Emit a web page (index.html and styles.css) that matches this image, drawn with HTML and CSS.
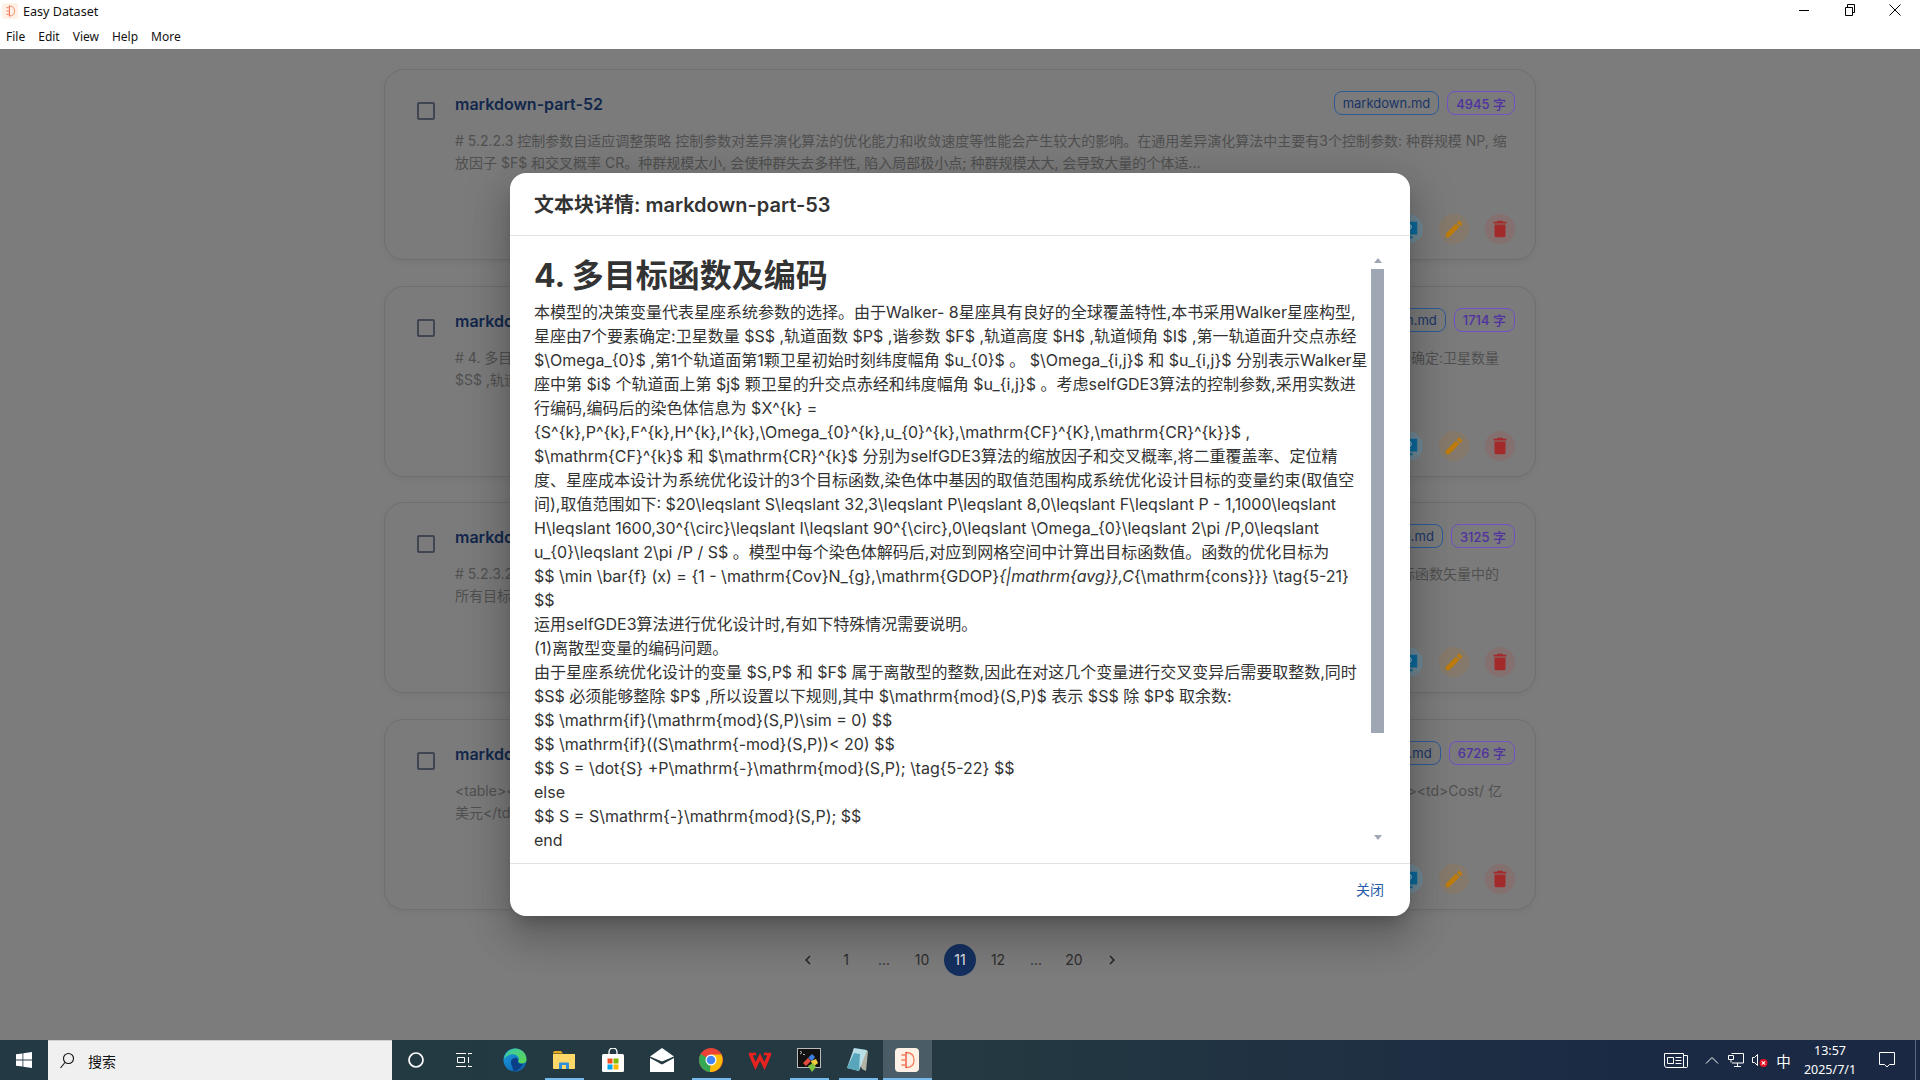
FILE: index.html
```html
<!DOCTYPE html>
<html lang="zh">
<head>
<meta charset="utf-8">
<title>Easy Dataset</title>
<link rel="stylesheet" href="styles.css">
</head>
<body>
<svg class="defs" width="0" height="0">
  <symbol id="ed-logo" viewBox="0 0 24 24">
    <rect width="24" height="24" rx="4" fill="#fff1e6"/>
    <path d="M11 4.500c5.500 0 8 3.200 8 7.500s-2.500 7.500-8 7.500" fill="none" stroke="#f2805c" stroke-width="1.300"/>
    <path d="M11 4v16" stroke="#e8482e" stroke-width="1.300"/>
    <path d="M6.500 7H10M6.500 12H10M6.500 17H10" stroke="#f2805c" stroke-width="1.500"/>
  </symbol>
  <symbol id="i-view" viewBox="0 0 24 24">
    <path d="M2 4h20v14h-8v2h3v2H7v-2h3v-2H2z"/>
    <path d="M12 7.500a2.500 2.500 0 0 1 3.600 2.300c0 1.500-1.800 1.700-1.800 3M13.800 14.300v1.200" fill="none" stroke="#8fb0c4" stroke-width="1.300"/>
  </symbol>
  <symbol id="i-edit" viewBox="0 0 24 24"><path d="M3 17.250V21h3.750L17.810 9.940l-3.750-3.750zM20.710 7.040c.39-.39.39-1.020 0-1.410l-2.340-2.340a.9959.9959 0 0 0-1.410 0l-1.830 1.830 3.750 3.750z"/></symbol>
  <symbol id="i-del" viewBox="0 0 24 24"><path d="M6 19c0 1.100.9 2 2 2h8c1.100 0 2-.9 2-2V7H6zM19 4h-3.500l-1-1h-5l-1 1H5v2h14z"/></symbol>
  <symbol id="i-box" viewBox="0 0 24 24"><path d="M19 5v14H5V5zm0-2H5c-1.100 0-2 .9-2 2v14c0 1.100.9 2 2 2h14c1.100 0 2-.9 2-2V5c0-1.100-.9-2-2-2z"/></symbol>
</svg>

<div class="app">
  <header class="chrome">
    <div class="title-row">
      <svg class="title-logo" width="16" height="16"><use href="#ed-logo"/></svg>
      <span class="app-name">Easy Dataset</span>
      <div class="win-controls">
        <span class="win-btn"><svg width="12" height="12" viewBox="0 0 12 12"><path d="M1 6.500h10" stroke="#000"/></svg></span>
        <span class="win-btn"><svg width="12" height="12" viewBox="0 0 12 12" fill="none" stroke="#000"><path d="M1.500 3.500h7v8h-7zM3.500 3.500v-3h7v8h-2"/></svg></span>
        <span class="win-btn"><svg width="12" height="12" viewBox="0 0 12 12"><path d="M.5.5l11 11M11.500.5l-11 11" stroke="#000"/></svg></span>
      </div>
    </div>
    <nav class="menu-row">
      <span class="menu-item">File</span><span class="menu-item">Edit</span><span class="menu-item">View</span><span class="menu-item">Help</span><span class="menu-item">More</span>
    </nav>
  </header>

  <main class="main">
    <section class="list">
      <article class="card">
        <span class="check"><svg width="24" height="24"><use href="#i-box"/></svg></span>
        <div class="card-body">
          <div class="card-head">
            <h3 class="card-title">markdown-part-52</h3>
            <span class="chip chip-file">markdown.md</span>
            <span class="chip chip-count">4945 字</span>
          </div>
          <p class="card-desc"># 5.2.2.3 控制参数自适应调整策略 控制参数对差异演化算法的优化能力和收敛速度等性能会产生较大的影响。在通用差异演化算法中主要有3个控制参数: 种群规模 NP, 缩放因子 $F$ 和交叉概率 CR。种群规模太小, 会使种群失去多样性, 陷入局部极小点; 种群规模太大, 会导致大量的个体适...</p>
          <div class="card-actions">
            <span class="act act-view"><svg width="22" height="22"><use href="#i-view"/></svg></span>
            <span class="act act-edit"><svg width="22" height="22"><use href="#i-edit"/></svg></span>
            <span class="act act-del"><svg width="22" height="22"><use href="#i-del"/></svg></span>
          </div>
        </div>
      </article>
      <article class="card">
        <span class="check"><svg width="24" height="24"><use href="#i-box"/></svg></span>
        <div class="card-body">
          <div class="card-head">
            <h3 class="card-title">markdown-part-53</h3>
            <span class="chip chip-file">markdown.md</span>
            <span class="chip chip-count">1714 字</span>
          </div>
          <p class="card-desc"># 4. 多目标函数及编码 本模型的决策变量代表星座系统参数的选择。由于Walker- 8星座具有良好的全球覆盖特性,本书采用Walker星座构型,星座由7个要素确定:卫星数量 $S$ ,轨道面数 $P$ ,谐参数 $F$ ,轨道高度 $H$ ,轨道倾角 $I$ ,第一轨道面升交点赤经...</p>
          <div class="card-actions">
            <span class="act act-view"><svg width="22" height="22"><use href="#i-view"/></svg></span>
            <span class="act act-edit"><svg width="22" height="22"><use href="#i-edit"/></svg></span>
            <span class="act act-del"><svg width="22" height="22"><use href="#i-del"/></svg></span>
          </div>
        </div>
      </article>
      <article class="card">
        <span class="check"><svg width="24" height="24"><use href="#i-box"/></svg></span>
        <div class="card-body">
          <div class="card-head">
            <h3 class="card-title">markdown-part-54</h3>
            <span class="chip chip-file">markdown.md</span>
            <span class="chip chip-count">3125 字</span>
          </div>
          <p class="card-desc"># 5.2.3.2 多目标优化算法的性能评价指标 在多目标优化问题的求解过程中,为了全面衡量所得近似解集质量,需要比较各个解在目标空间中的优劣,通常以目标函数矢量中的<br>所有目标分量进行比较,并据此判断解之间的支配关系...</p>
          <div class="card-actions">
            <span class="act act-view"><svg width="22" height="22"><use href="#i-view"/></svg></span>
            <span class="act act-edit"><svg width="22" height="22"><use href="#i-edit"/></svg></span>
            <span class="act act-del"><svg width="22" height="22"><use href="#i-del"/></svg></span>
          </div>
        </div>
      </article>
      <article class="card">
        <span class="check"><svg width="24" height="24"><use href="#i-box"/></svg></span>
        <div class="card-body">
          <div class="card-head">
            <h3 class="card-title">markdown-part-55</h3>
            <span class="chip chip-file">markdown.md</span>
            <span class="chip chip-count">6726 字</span>
          </div>
          <p class="card-desc">&lt;table&gt;&lt;tr&gt;&lt;td&gt;星座设计案&lt;/td&gt;&lt;td&gt;Coverage/%&lt;/td&gt;&lt;td&gt;GDOP&lt;/td&gt;&lt;td&gt;S&lt;/td&gt;&lt;td&gt;P&lt;/td&gt;&lt;td&gt;F&lt;/td&gt;&lt;td&gt;H/km&lt;/td&gt;&lt;td&gt;I&lt;/td&gt;&lt;td&gt;Ω&lt;/td&gt;&lt;td&gt;Cost/ 亿<br>美元&lt;/td&gt;&lt;/tr&gt;&lt;tr&gt;&lt;td&gt;1&lt;/td&gt;&lt;/tr&gt;...</p>
          <div class="card-actions">
            <span class="act act-view"><svg width="22" height="22"><use href="#i-view"/></svg></span>
            <span class="act act-edit"><svg width="22" height="22"><use href="#i-edit"/></svg></span>
            <span class="act act-del"><svg width="22" height="22"><use href="#i-del"/></svg></span>
          </div>
        </div>
      </article>
    </section>

    <nav class="pager">
      <span class="page"><svg width="18" height="18" viewBox="0 0 24 24"><path d="M15.410 7.410 14 6l-6 6 6 6 1.410-1.410L10.830 12z"/></svg></span>
      <span class="page">1</span><span class="page">...</span><span class="page">10</span><span class="page page-on">11</span><span class="page">12</span><span class="page">...</span><span class="page">20</span>
      <span class="page"><svg width="18" height="18" viewBox="0 0 24 24"><path d="M10 6 8.590 7.410 13.170 12l-4.580 4.590L10 18l6-6z"/></svg></span>
    </nav>

    <div class="dialog-wrap">
      <div class="dialog">
        <h2 class="dialog-title">文本块详情: markdown-part-53</h2>
        <div class="dialog-body">
          <div class="doc">
            <h1 class="doc-h1">4. 多目标函数及编码</h1>
            <p class="doc-p">本模型的决策变量代表星座系统参数的选择。由于Walker- 8星座具有良好的全球覆盖特性,本书采用Walker星座构型,<br>星座由7个要素确定:卫星数量 $S$ ,轨道面数 $P$ ,谐参数 $F$ ,轨道高度 $H$ ,轨道倾角 $I$ ,第一轨道面升交点赤经<br>$\Omega_{0}$ ,第1个轨道面第1颗卫星初始时刻纬度幅角 $u_{0}$ 。 $\Omega_{i,j}$ 和 $u_{i,j}$ 分别表示Walker星<br>座中第 $i$ 个轨道面上第 $j$ 颗卫星的升交点赤经和纬度幅角 $u_{i,j}$ 。考虑selfGDE3算法的控制参数,采用实数进<br>行编码,编码后的染色体信息为 $X^{k} =<br>{S^{k},P^{k},F^{k},H^{k},I^{k},\Omega_{0}^{k},u_{0}^{k},\mathrm{CF}^{K},\mathrm{CR}^{k}}$ ,<br>$\mathrm{CF}^{k}$ 和 $\mathrm{CR}^{k}$ 分别为selfGDE3算法的缩放因子和交叉概率,将二重覆盖率、定位精<br>度、星座成本设计为系统优化设计的3个目标函数,染色体中基因的取值范围构成系统优化设计目标的变量约束(取值空<br>间),取值范围如下: $20\leqslant S\leqslant 32,3\leqslant P\leqslant 8,0\leqslant F\leqslant P - 1,1000\leqslant<br>H\leqslant 1600,30^{\circ}\leqslant I\leqslant 90^{\circ},0\leqslant \Omega_{0}\leqslant 2\pi /P,0\leqslant<br>u_{0}\leqslant 2\pi /P / S$ 。模型中每个染色体解码后,对应到网格空间中计算出目标函数值。函数的优化目标为<br>$$ \min \bar{f} (x) = {1 - \mathrm{Cov}N_{g},\mathrm{GDOP}<em>{|mathrm{avg}},C</em>{\mathrm{cons}}} \tag{5-21}<br>$$<br>运用selfGDE3算法进行优化设计时,有如下特殊情况需要说明。<br>(1)离散型变量的编码问题。<br>由于星座系统优化设计的变量 $S,P$ 和 $F$ 属于离散型的整数,因此在对这几个变量进行交叉变异后需要取整数,同时<br>$S$ 必须能够整除 $P$ ,所以设置以下规则,其中 $\mathrm{mod}(S,P)$ 表示 $S$ 除 $P$ 取余数:<br>$$ \mathrm{if}(\mathrm{mod}(S,P)\sim = 0) $$<br>$$ \mathrm{if}((S\mathrm{-mod}(S,P))&lt; 20) $$<br>$$ S = \dot{S} +P\mathrm{-}\mathrm{mod}(S,P); \tag{5-22} $$<br>else<br>$$ S = S\mathrm{-}\mathrm{mod}(S,P); $$<br>end</p>
          </div>
          <div class="scrollbar">
            <span class="sb-up"></span>
            <span class="sb-thumb"></span>
            <span class="sb-down"></span>
          </div>
        </div>
        <div class="dialog-foot"><span class="btn-close">关闭</span></div>
      </div>
    </div>
  </main>

  <footer class="taskbar">
    <span class="start"><svg width="16" height="16" viewBox="0 0 16 16" fill="#fff"><path d="M0 2.300 6.500 1.400v6.200H0zM7.300 1.300 16 0v7.600H7.300zM0 8.400h6.500v6.200L0 13.700zM7.300 8.400H16V16l-8.700-1.300z"/></svg></span>
    <div class="search">
      <svg width="16" height="18" viewBox="0 0 16 18" fill="none" stroke="#111" stroke-width="1.100"><circle cx="9.500" cy="6.500" r="5"/><path d="M6 10.500 1.500 16"/></svg>
      <span>搜索</span>
    </div>
    <span class="tb-sys"><svg width="18" height="18" viewBox="0 0 18 18"><circle cx="9" cy="9" r="7" fill="none" stroke="#fff" stroke-width="1.700"/></svg></span>
    <span class="tb-sys tb-sys-last"><svg width="18" height="18" viewBox="0 0 18 18" fill="none" stroke="#fff"><path d="M1 2.500h10M1 15.500h10M2.500 6.500h7v5h-7zM13.500 2v1.500M13.500 6v6M13.500 14.500V16M13.500 2.500H17M13.500 15.500H17"/></svg></span>

    <span class="tb-app"><svg width="24" height="24" viewBox="0 0 24 24">
      <defs>
        <linearGradient id="edge-a" x1="0" y1="0" x2="1" y2="1"><stop offset="0" stop-color="#36c7b0"/><stop offset="1" stop-color="#5fd94b"/></linearGradient>
        <linearGradient id="edge-b" x1="0" y1="0" x2="1" y2="1"><stop offset="0" stop-color="#1a9fe0"/><stop offset="1" stop-color="#0b5aa8"/></linearGradient>
      </defs>
      <circle cx="12" cy="12" r="11.500" fill="url(#edge-b)"/>
      <path d="M1 11C2 4.500 7 .5 12.500.5 19 .5 23.500 5.500 23.500 11.500c0 2.500-2 4-4.500 4-2 0-4-1-4-2.500 1-1 1-2 .5-3.500C14 6.500 10.500 5.500 7.500 6.500 4.500 7.500 2.500 9 1 11z" fill="url(#edge-a)"/>
      <path d="M8 14c0-3 2.500-4.500 5-4 2 .5 2.500 2 2 3.500 0 2.500 3 3 5 2-1.500 4-5 7.500-10 7.500C11 20 8 18 8 14z" fill="#0a3e86"/>
    </svg></span>
    <span class="tb-app tb-on"><svg width="24" height="24" viewBox="0 0 24 24">
      <path d="M1 5a2 2 0 0 1 2-2h6l2 2.500H1z" fill="#e8a91e"/>
      <path d="M1 6h22v14a1 1 0 0 1-1 1H2a1 1 0 0 1-1-1z" fill="#fdd768"/>
      <path d="M7 21v-5.500a1 1 0 0 1 1-1h8a1 1 0 0 1 1 1V21h-3v-4h-4v4z" fill="#2f8fdc"/>
    </svg></span>
    <span class="tb-app"><svg width="24" height="24" viewBox="0 0 24 24">
      <path d="M8 7V4a4 4 0 0 1 8 0v3" fill="none" stroke="#fff" stroke-width="1.300"/>
      <rect x="1" y="6" width="22" height="18" rx="1.500" fill="#fff"/>
      <path d="M6.500 10.500h5v5h-5z" fill="#f25022"/><path d="M12.500 10.500h5v5h-5z" fill="#7fba00"/><path d="M6.500 16.500h5v5h-5z" fill="#00a4ef"/><path d="M12.500 16.500h5v5h-5z" fill="#ffb900"/>
    </svg></span>
    <span class="tb-app"><svg width="24" height="24" viewBox="0 0 24 24">
      <path d="M0 8.500 12 0l12 8.500-12 5z" fill="#fff"/>
      <path d="M0 10v14h24V10L12 16.500z" fill="#fff"/>
      <path d="M9 16 24 9.500 12 14z" fill="#23383f"/>
    </svg></span>
    <span class="tb-app tb-on"><svg width="24" height="24" viewBox="0 0 24 24">
      <circle cx="12" cy="12" r="12" fill="#ea4335"/>
      <path d="M12 12 1.600 6C-1 10.500-.3 16.500 3.500 20.500 6 23 8.500 24 11 24z" fill="#34a853"/>
      <path d="M12 6.500h10.500C24 10 24 15 21.500 18.500 19 22.500 15 24 11 24z" fill="#fbbc05"/>
      <circle cx="12" cy="12" r="5.500" fill="#fff"/><circle cx="12" cy="12" r="4.300" fill="#4285f4"/>
    </svg></span>
    <span class="tb-app"><svg width="24" height="24" viewBox="0 0 24 24" fill="none" stroke="#e8231f" stroke-width="3.400">
      <path d="M2.500 6.500 7.500 18l4.500-9 4.500 9L21.500 6.500"/><path d="M1 6h7M16 6h7" stroke-width="2.400"/>
    </svg></span>
    <span class="tb-app tb-on"><svg width="24" height="24" viewBox="0 0 24 24">
      <rect x="0.500" y="0.500" width="23" height="19" fill="#111" stroke="#bbb"/>
      <path d="M3 3l2 1.500L3 6M6 6.500h2" stroke="#ddd" fill="none" stroke-width=".8"/>
      <path d="M6 15l5-5 3 3-5 5z" fill="#e54b3c"/><path d="M11 10l4-4 3 3-3 4z" fill="#3d7fe0"/><path d="M14 13l5-2 2 4-5 4z" fill="#f6cc3f"/><path d="M11 18l5-3 3 4-4 5z" fill="#7fc241"/>
    </svg></span>
    <span class="tb-app tb-on"><svg width="24" height="24" viewBox="0 0 24 24">
      <path d="M7 1l15 2-2 20-4-2z" fill="#b3b3a5"/>
      <path d="M8 0l13 2-8 21-12-3z" fill="#b8dfe8"/>
      <path d="M1 20 8 5l6 1-1 17z" fill="#58a6bb"/>
    </svg></span>
    <span class="tb-app tb-on tb-current"><svg width="24" height="24"><use href="#ed-logo"/></svg></span>

    <div class="tray">
      <span class="tray-news"><svg width="24" height="16" viewBox="0 0 24 16" fill="none" stroke="#fff"><path d="M.5 1.500h19v14H3a2.500 2.500 0 0 1-2.500-2.500zM19.500 3.500h4v11a1 1 0 0 1-1 1h-3M3.500 5.500h6v6h-6zM11.500 5.500h6M11.500 8.500h6M11.500 11.500h6"/></svg></span>
      <span class="tray-ico"><svg width="14" height="8" viewBox="0 0 14 8" fill="none" stroke="#fff"><path d="M1 7.500l6-6 6 6"/></svg></span>
      <span class="tray-ico"><svg width="16" height="14" viewBox="0 0 16 14" fill="none" stroke="#fff"><path d="M3.500.5h12v9.500H4M9.500 10v3.500M6 13.500h7M.5 2.500h5v4h-5zM3 6.500v3"/></svg></span>
      <span class="tray-ico"><svg width="16" height="14" viewBox="0 0 16 14"><path d="M.5 4.500h2l3-3v11l-3-3h-2z" fill="none" stroke="#fff"/><circle cx="11.500" cy="10" r="4" fill="#e81123"/><path d="M9.800 8.300l3.400 3.400M13.200 8.300l-3.400 3.400" stroke="#fff" stroke-width="1.100"/></svg></span>
      <span class="tray-ime">中</span>
      <div class="clock"><span>13:57</span><span>2025/7/1</span></div>
      <span class="tray-note"><svg width="16" height="16" viewBox="0 0 16 16" fill="none" stroke="#fff"><path d="M.5.500h15v12h-5L8 15l-2.500-2.500h-5z"/></svg></span>
      <span class="show-desk"></span>
    </div>
  </footer>
</div>
</body>
</html>
```

FILE: styles.css
```css
* { box-sizing: border-box; }
html, body { margin: 0; height: 100%; }
body { font-family: Inter, "Noto Sans CJK SC", sans-serif; overflow: hidden; }
.defs { position: absolute; }
.app { display: flex; flex-direction: column; height: 1080px; }

/* window chrome */
.chrome { height: 49px; background: #fff; flex: none; font-family: "Noto Sans", "Noto Sans CJK SC", sans-serif; font-size: 12px; color: #111; }
.title-row { height: 24px; display: flex; align-items: flex-start; padding: 3px 0 0 2px; }
.app-name { margin: 1px 0 0 5px; font-size: 12.600px; line-height: 16px; }
.win-controls { display: flex; align-self: flex-start; height: 20px; margin: -3px 2px 0 auto; }
.win-btn { width: 45.500px; display: flex; align-items: center; justify-content: center; }
.menu-row { height: 25px; display: flex; align-items: center; padding-left: 6px; gap: 13px; font-size: 12px; }

/* page behind the dialog */
.main { position: relative; flex: 1; background: #7c7c7c; display: flex; flex-direction: column; align-items: center; padding-top: 20px; }
.list { width: 1152px; display: flex; flex-direction: column; gap: 25.670px; }
.card { height: 191px; display: flex; background: #7b7b7b; border: 1px solid #6f6f6f; border-radius: 20px; padding: 21px 20px 15px 29px; box-shadow: 0 2px 6px rgba(0,0,0,.05); }
.check { width: 24px; height: 24px; margin-top: 8px; flex: none; fill: #3f4551; }
.check svg { display: block; }
.card-body { flex: 1; min-width: 0; margin-left: 17px; display: flex; flex-direction: column; }
.card-head { display: flex; align-items: flex-start; gap: 8px; height: 24px; }
.card-title { margin: 1px auto 0 0; font-size: 16px; line-height: 24px; font-weight: 600; color: #12274b; }
.chip { height: 24px; display: flex; align-items: center; border-radius: 8px; font-size: 13px; padding: 0 8px; border: 1px solid; }
.chip-file { color: #1a3466; border-color: #2f5a96; }
.chip-count { color: #4f32a0; border-color: #7350c4; font-weight: 500; }
.card-desc { margin: 15px 0 0; font-size: 14px; line-height: 22px; color: #505050; height: 44px; overflow: hidden; }
.card-actions { margin-top: auto; display: flex; justify-content: flex-end; gap: 16px; }
.act { width: 30px; height: 30px; border-radius: 50%; display: flex; align-items: center; justify-content: center; }
.act-view { background: #6f8794; fill: #0a6a9c; }
.act-edit { background: #85796b; fill: #bd7c0c; }
.act-del { background: #84706f; fill: #a32a2a; }

.pager { display: flex; gap: 6px; margin-top: 34px; font-size: 14px; color: #2e2e2e; }
.page { width: 32px; height: 32px; display: flex; align-items: center; justify-content: center; border-radius: 50%; fill: #262626; }
.page-on { background: #15305f; color: #e0e0e0; }

/* dialog */
.dialog-wrap { position: absolute; inset: 0; display: flex; align-items: center; justify-content: center; }
.dialog { width: 900px; height: 743px; background: #fff; border-radius: 16px; display: flex; flex-direction: column; color: #333; box-shadow: 0 11px 15px -7px rgba(0,0,0,.2), 0 24px 38px 3px rgba(0,0,0,.14), 0 9px 46px 8px rgba(0,0,0,.12); }
.dialog-title { margin: 0; height: 63px; padding: 0 24px 2px; display: flex; align-items: center; font-size: 20px; font-weight: 600; border-bottom: 1px solid #e2e2e2; flex: none; }
.dialog-body { flex: 1; min-height: 0; display: flex; padding: 16px 26px 0 24px; }
.doc { flex: 1; min-width: 0; }
.doc-h1 { margin: 0; font-size: 32px; line-height: 48px; font-weight: 700; }
.doc-p { margin: 0; font-size: 16px; line-height: 24px; white-space: nowrap; }
.scrollbar { width: 13px; flex: none; display: flex; flex-direction: column; align-items: center; padding-top: 6px; }
.sb-up { border: 4px solid transparent; border-top: 0; border-bottom: 5px solid #a0a7b4; margin-bottom: 6px; }
.sb-thumb { width: 13px; height: 464px; background: #a0a7b4; }
.sb-down { border: 4px solid transparent; border-bottom: 0; border-top: 5px solid #a0a7b4; margin-top: 102px; }
.dialog-foot { height: 53px; flex: none; border-top: 1px solid #e2e2e2; display: flex; align-items: center; justify-content: flex-end; padding: 0 26px 2px; }
.btn-close { font-size: 14px; color: #2a5caa; }

/* taskbar */
.taskbar { height: 40px; flex: none; display: flex; align-items: stretch; background: linear-gradient(90deg, #233a44 0%, #243941 50%, #1b2a44 85%, #1a2844 100%); font-family: "Noto Sans", "Noto Sans CJK SC", sans-serif; color: #fff; }
.start { width: 48px; display: flex; align-items: center; justify-content: center; }
.search { width: 344px; background: #f0f0f0; border-top: 1px solid #d0d0d0; display: flex; align-items: center; padding-left: 11px; gap: 13px; color: #111; font-size: 14px; }
.tb-sys { width: 48px; display: flex; align-items: center; justify-content: center; }
.tb-sys-last { margin-right: 2.500px; }
.tb-app { width: 49px; display: flex; align-items: center; justify-content: center; position: relative; }
.tb-on::after { content: ""; position: absolute; left: 5px; right: 5px; bottom: 0; height: 2px; background: #76b9ed; }
.tb-current { background: #4a5c66; }
.tb-current::after { left: 0; right: 0; }
.tray { margin-left: auto; display: flex; align-items: stretch; }
.tray-news { width: 40px; margin-right: 4px; display: flex; align-items: center; justify-content: center; }
.tray-ico { width: 24px; display: flex; align-items: center; justify-content: center; }
.tray-ime { width: 23px; display: flex; align-items: center; justify-content: center; font-size: 14.500px; }
.clock { width: 70px; display: flex; flex-direction: column; align-items: center; justify-content: center; font-size: 12.500px; line-height: 19px; margin-right: 2px; }
.tray-note { width: 40px; display: flex; align-items: center; justify-content: center; }
.show-desk { width: 13px; position: relative; }
.show-desk::after { content: ""; position: absolute; left: 8px; top: 0; bottom: 0; width: 1px; background: #5a6a80; }
```
